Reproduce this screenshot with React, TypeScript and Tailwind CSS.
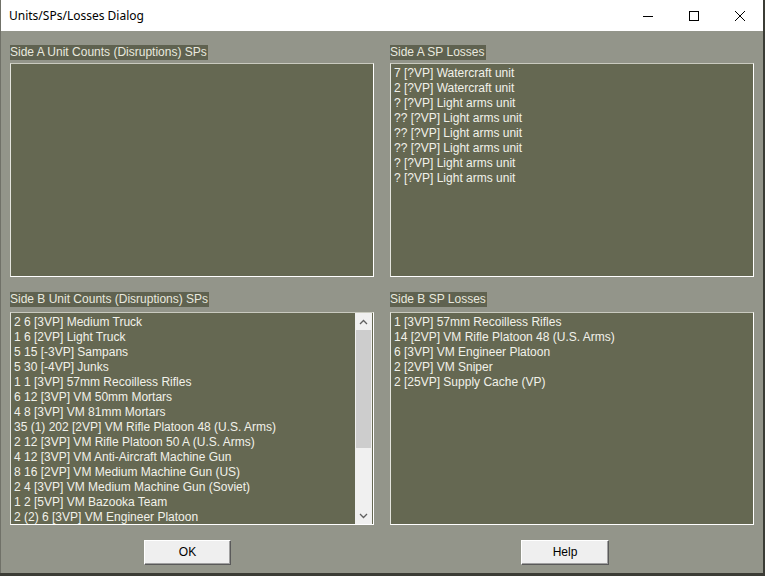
import React from 'react';

const sideAUnits: string[] = [];

const sideALosses = [
  '7 [?VP] Watercraft unit',
  '2 [?VP] Watercraft unit',
  '? [?VP] Light arms unit',
  '?? [?VP] Light arms unit',
  '?? [?VP] Light arms unit',
  '?? [?VP] Light arms unit',
  '? [?VP] Light arms unit',
  '? [?VP] Light arms unit',
];

const sideBUnits = [
  '2 6 [3VP] Medium Truck',
  '1 6 [2VP] Light Truck',
  '5 15 [-3VP] Sampans',
  '5 30 [-4VP] Junks',
  '1 1 [3VP] 57mm Recoilless Rifles',
  '6 12 [3VP] VM 50mm Mortars',
  '4 8 [3VP] VM 81mm Mortars',
  '35 (1) 202 [2VP] VM Rifle Platoon 48 (U.S. Arms)',
  '2 12 [3VP] VM Rifle Platoon 50 A (U.S. Arms)',
  '4 12 [3VP] VM Anti-Aircraft Machine Gun',
  '8 16 [2VP] VM Medium Machine Gun (US)',
  '2 4 [3VP] VM Medium Machine Gun (Soviet)',
  '1 2 [5VP] VM Bazooka Team',
  '2 (2) 6 [3VP] VM Engineer Platoon',
];

const sideBLosses = [
  '1 [3VP] 57mm Recoilless Rifles',
  '14 [2VP] VM Rifle Platoon 48 (U.S. Arms)',
  '6 [3VP] VM Engineer Platoon',
  '2 [2VP] VM Sniper',
  '2 [25VP] Supply Cache (VP)',
];

function Label({ text, gap }: { text: string; gap: number }) {
  return (
    <div className="h-[15px] flex" style={{ marginBottom: gap }}>
      <span className="bg-[#5f6250] text-[#e9e9df] text-[12px] leading-[15px] pr-[1px]">{text}</span>
    </div>
  );
}

function ListBox({ items, height, scroll }: { items: string[]; height: number; scroll?: boolean }) {
  return (
    <div
      className="relative bg-[#656852] border border-t-[#c9cabf] border-l-[#e4e5de] border-b-white border-r-white overflow-hidden flex"
      style={{ height }}
    >
      <div className="flex-1 pt-[2px] pl-[3px] overflow-hidden">
        {items.map((t, i) => (
          <div key={i} className="text-[12px] leading-[15px] text-[#f2f2ea] whitespace-nowrap">
            {t}
          </div>
        ))}
      </div>
      {scroll && (
        <div className="w-[17px] mr-[1px] bg-[#f0f0f0] flex flex-col">
          <div className="h-[17px] flex items-center justify-center">
            <svg width="9" height="6" viewBox="0 0 9 6">
              <polyline points="1,5 4.5,1.5 8,5" fill="none" stroke="#606060" strokeWidth="1.3" />
            </svg>
          </div>
          <div className="h-[118px] mx-[1px] bg-[#cdcdcd]" />
          <div className="flex-1" />
          <div className="h-[17px] flex items-center justify-center">
            <svg width="9" height="6" viewBox="0 0 9 6">
              <polyline points="1,1 4.5,4.5 8,1" fill="none" stroke="#606060" strokeWidth="1.3" />
            </svg>
          </div>
        </div>
      )}
    </div>
  );
}

function Button({ label, width }: { label: string; width: number }) {
  return (
    <button
      className="h-[25px] bg-[#efefef] border border-t-white border-l-white border-b-[#5a5a5a] border-r-[#5a5a5a] text-[12px] text-black shadow-[inset_-1px_-1px_0_#a0a0a0]"
      style={{ width }}
    >
      {label}
    </button>
  );
}

export default function App() {
  return (
    <div
      className="w-[765px] h-[576px] bg-[#3b3c35] overflow-hidden"
      style={{ fontFamily: '"Liberation Sans", Arial, sans-serif' }}
    >
      <div className="w-[763px] h-[573px] flex flex-col border-l border-[#707168]">
        {/* Title bar */}
        <div className="h-[31px] bg-white flex items-center shrink-0">
          <span className="pl-[8px] flex-1 text-[12px] text-black" style={{ fontFamily: '"Noto Sans", "Liberation Sans", sans-serif' }}>
            Units/SPs/Losses Dialog
          </span>
          <div className="flex h-full">
            <div className="w-[46px] h-full flex items-center justify-center">
              <svg width="10" height="10" viewBox="0 0 10 10">
                <line x1="0" y1="5.5" x2="10" y2="5.5" stroke="#000" strokeWidth="1" />
              </svg>
            </div>
            <div className="w-[46px] h-full flex items-center justify-center">
              <svg width="10" height="10" viewBox="0 0 10 10">
                <rect x="0.5" y="0.5" width="9" height="9" fill="none" stroke="#000" strokeWidth="1" />
              </svg>
            </div>
            <div className="w-[46px] h-full flex items-center justify-center">
              <svg width="10" height="10" viewBox="0 0 10 10">
                <path d="M0 0 L10 10 M10 0 L0 10" stroke="#000" strokeWidth="1" />
              </svg>
            </div>
          </div>
        </div>

        {/* Body */}
        <div className="flex-1 bg-[#93958a] pt-[14px] pl-[9px] pr-[8px]">
          <div className="grid grid-cols-[364px_364px] gap-x-[16px]">
            <div>
              <Label text="Side A Unit Counts (Disruptions) SPs" gap={3} />
              <ListBox items={sideAUnits} height={214} />
            </div>
            <div>
              <Label text="Side A SP Losses" gap={3} />
              <ListBox items={sideALosses} height={214} />
            </div>
            <div className="mt-[15px]">
              <Label text="Side B Unit Counts (Disruptions) SPs" gap={5} />
              <ListBox items={sideBUnits} height={213} scroll />
            </div>
            <div className="mt-[15px]">
              <Label text="Side B SP Losses" gap={5} />
              <ListBox items={sideBLosses} height={213} />
            </div>
          </div>

          <div className="grid grid-cols-[364px_364px] gap-x-[16px] mt-[14px]">
            <div className="pl-[134px]">
              <Button label="OK" width={87} />
            </div>
            <div className="pl-[131px]">
              <Button label="Help" width={88} />
            </div>
          </div>
        </div>
      </div>
    </div>
  );
}
